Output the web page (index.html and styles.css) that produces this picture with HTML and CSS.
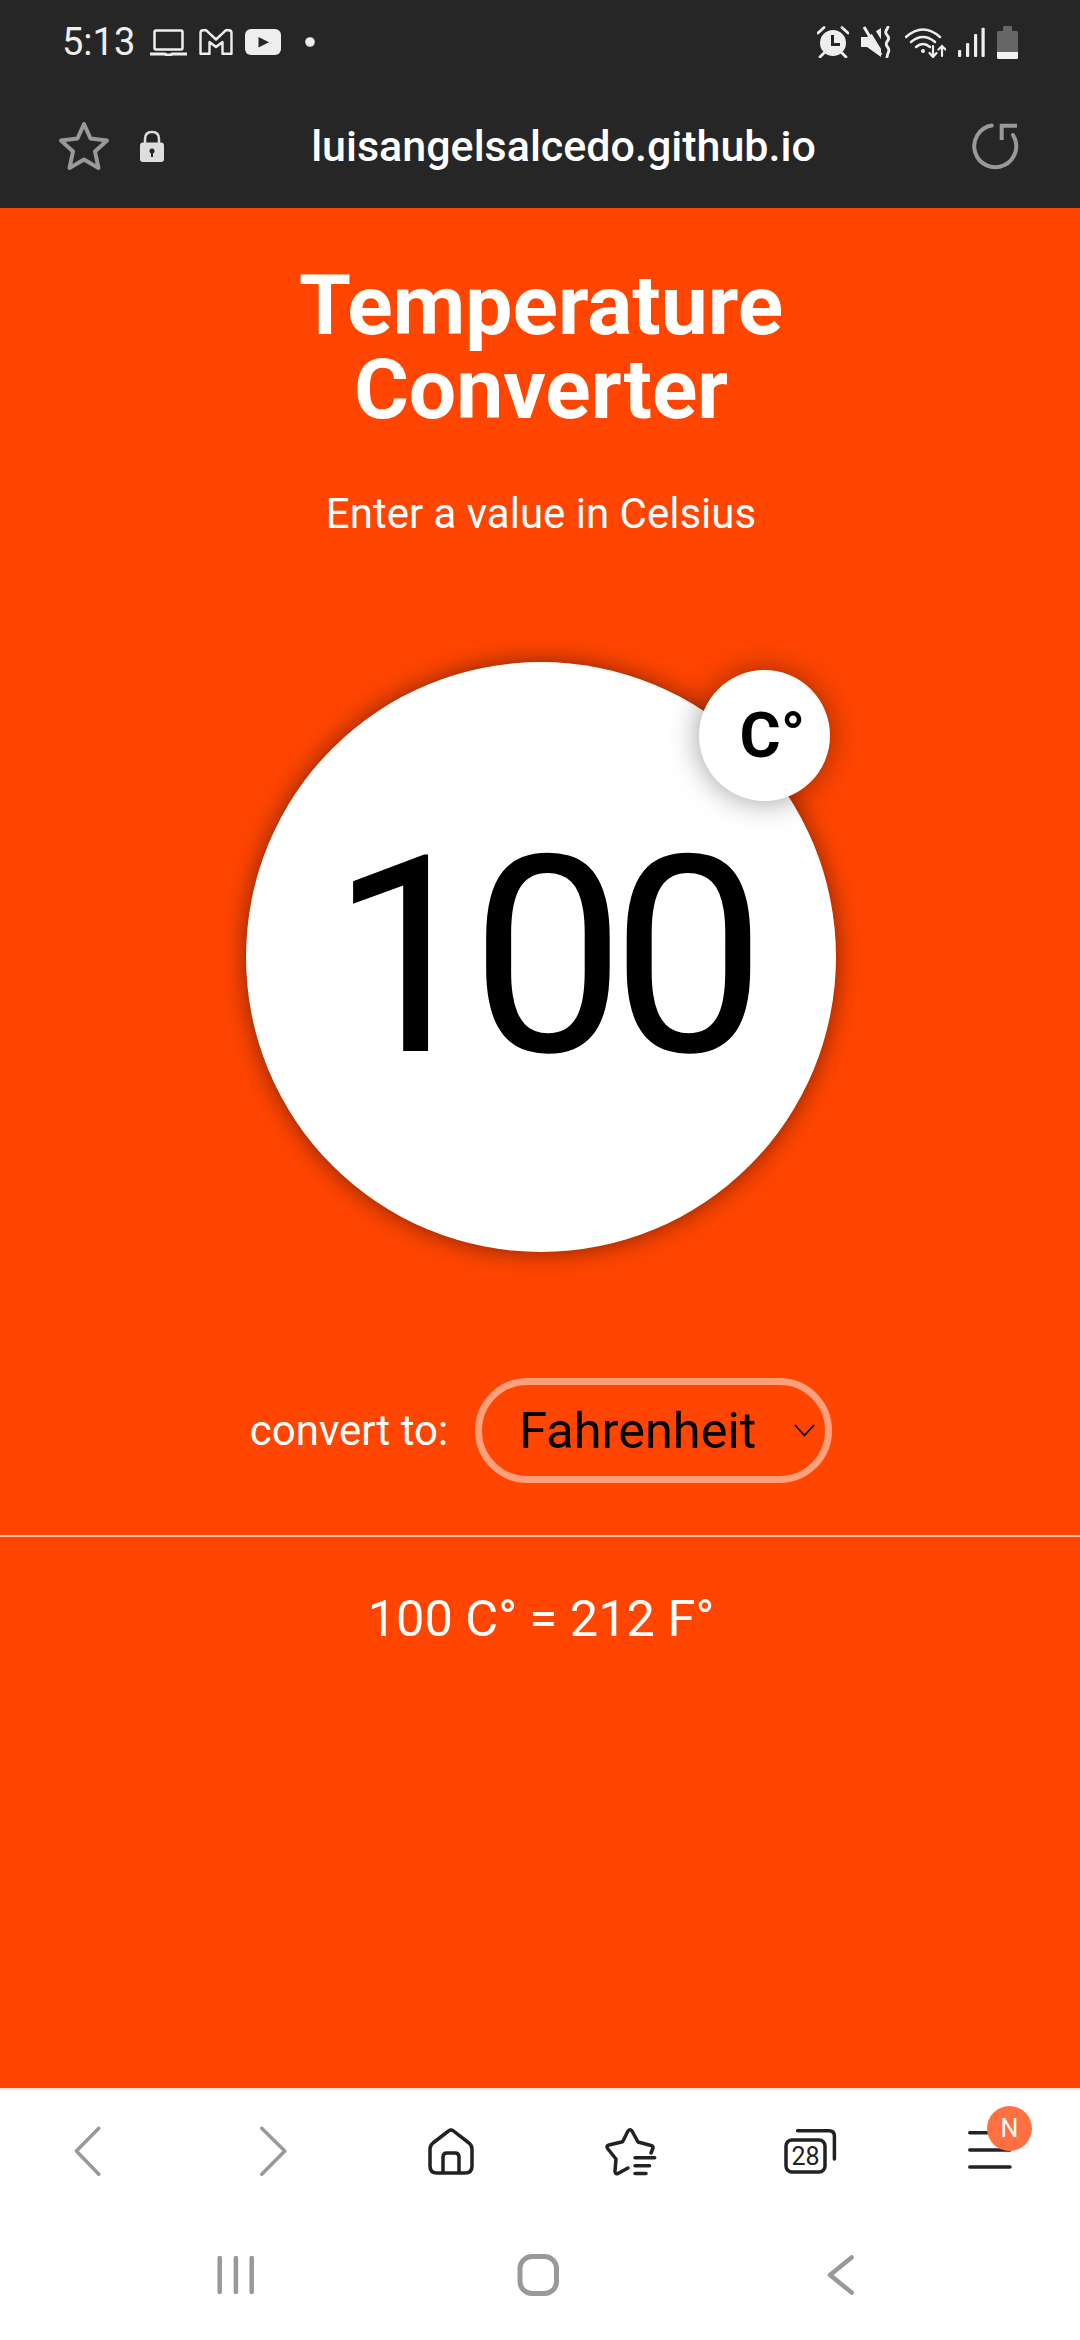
FILE: index.html
```html
<!DOCTYPE html>
<html lang="en">
<head>
	<meta charset="UTF-8">
	<title>Temperature Converter</title>
	<link rel="stylesheet" href="styles.css">
</head>
<body>
	<div class="phone">
		<div class="statusbar">
			<div class="status-left">
				<span class="time">5:13</span>
				<svg width="37" height="27" viewBox="0 0 37 27" fill="none" stroke="#eee" stroke-width="2.5"><rect x="4.500" y="1.500" width="28" height="19" rx="1.500"/><path d="M0 25H15L16.500 26H20.500L22 25H37" stroke-width="3"/></svg>
				<svg width="34" height="26" viewBox="0 0 34 26" fill="none" stroke="#eee" stroke-width="2.400" stroke-linejoin="round"><path d="M1.500 4Q1.500 1.200 4 1.200H7L17 10.500L27 1.200H30Q32.500 1.200 32.500 4V24.800H23.500V13L17 18L10.500 13V24.800H1.500Z"/></svg>
				<svg width="36" height="26" viewBox="0 0 36 26"><rect width="36" height="26" rx="6" fill="#eee"/><path d="M13.500 8V18.500L24 13.200Z" fill="#262626"/></svg>
				<svg class="dot" width="10" height="10" viewBox="0 0 10 10"><circle cx="5" cy="5" r="4.800" fill="#eee"/></svg>
			</div>
			<div class="status-right">
				<svg width="32" height="32" viewBox="0 0 32 32"><circle cx="16" cy="17" r="13" fill="#eee"/><path d="M15.500 9V18.500H23" fill="none" stroke="#262626" stroke-width="3"/><path d="M1 7L7 1.500M31 7L25 1.500M3 31L7 27M29 31L25 27" stroke="#eee" stroke-width="2.800" stroke-linecap="round"/></svg>
				<svg width="32" height="32" viewBox="0 0 32 32" fill="none"><path d="M0 11H6L20 2V31L6 21H0Z" fill="#eee"/><path d="M7 -3L26 28" stroke="#262626" stroke-width="5"/><path d="M3 1L20 29" stroke="#eee" stroke-width="3"/><path d="M27 1L25 5Q24 7 26 9Q29 12 26.500 15Q24 18 26.500 21Q29 24 27 27L26 31" stroke="#eee" stroke-width="2.800" stroke-linecap="round"/></svg>
				<svg width="41" height="32" viewBox="0 0 41 32" fill="none" stroke="#eee" stroke-width="2.500" stroke-linecap="round"><path d="M1 11Q18 -4 35 11"/><path d="M6 16Q18 6 30 16"/><path d="M11 21Q18 15 25 21"/><circle cx="18" cy="25" r="2" fill="#eee" stroke="none"/><path d="M28 20V30M24.500 27L28 31L31.500 27M37 30V20M33.500 23.500L37 20L40.500 23.500" stroke-width="2.200"/></svg>
				<svg width="27" height="32" viewBox="0 0 27 32" fill="#eee"><rect x="0" y="24" width="3.200" height="7" rx="1"/><rect x="8" y="17" width="3.200" height="14" rx="1"/><rect x="16" y="8" width="3.200" height="23" rx="1"/><rect x="23.500" y="1.700" width="3.200" height="29.300" rx="1"/></svg>
				<svg width="21" height="33" viewBox="0 0 21 33"><path d="M6 1Q6 0 7 0H14Q15 0 15 1V5H19.500Q21 5 21 6.500V26H0V6.500Q0 5 1.500 5H6Z" fill="#666"/><path d="M0 26H21V31.500Q21 33 19.500 33H1.500Q0 33 0 31.500Z" fill="#f2f2f2"/></svg>
			</div>
		</div>

		<div class="urlbar">
			<svg class="url-star" width="52" height="50" viewBox="0 0 52 50" fill="none" stroke="#999" stroke-width="4" stroke-linejoin="round"><path d="M26 3L32.500 17.500L49 19.500L37 30.500L40.500 47L26 38.500L11.500 47L15 30.500L3 19.500L19.500 17.500Z"/></svg>
			<svg class="url-lock" width="24" height="32" viewBox="0 0 24 32"><path d="M5 14V9Q5 2 12 2Q19 2 19 9V14" fill="none" stroke="#ddd" stroke-width="2.500"/><rect y="12.500" width="24" height="19.500" rx="3" fill="#ddd"/><circle cx="12" cy="21" r="2.500" fill="#262626"/><rect x="11" y="21" width="2" height="6" fill="#262626"/></svg>
			<span class="url-text">luisangelsalcedo.github.io</span>
			<svg width="48" height="48" viewBox="0 0 48 48" fill="none" stroke="#999" stroke-width="4"><path d="M19.700 3.500A21 21 0 1 0 41 13" stroke-linecap="round"/><path d="M45 3.700H29.700V18"/></svg>
		</div>

		<main class="main">
			<h1 class="title">Temperature<br>Converter</h1>
			<p class="subtitle">Enter a value in Celsius</p>

			<div class="dial">
				<span class="dial-value">100</span>
				<span class="dial-unit">C°</span>
			</div>

			<div class="convert">
				<label class="convert-label">convert to:</label>
				<div class="select">
					<span>Fahrenheit</span>
					<svg width="21" height="13" viewBox="0 0 21 13" fill="none" stroke="#000" stroke-width="1.800"><path d="M1 1L10.500 11.500L20 1"/></svg>
				</div>
			</div>

			<hr class="divider">
			<p class="result">100 C° = 212 F°</p>
		</main>

		<div class="bottom">
			<nav class="tabbar">
				<div class="tab">
					<svg width="80" height="80" viewBox="0 0 80 80" fill="none" stroke="#999" stroke-width="3.500" stroke-linecap="round" stroke-linejoin="round"><path d="M48.800 16.300L26.400 39L48.800 62.300"/></svg>
				</div>
				<div class="tab">
					<svg width="80" height="80" viewBox="0 0 80 80" fill="none" stroke="#999" stroke-width="3.500" stroke-linecap="round" stroke-linejoin="round"><path d="M31.700 16.300L54.800 39L31.700 62.300"/></svg>
				</div>
				<div class="tab">
					<svg width="80" height="80" viewBox="0 0 80 80" fill="none" stroke="#222" stroke-width="3.500" stroke-linejoin="round"><path d="M38.500 19Q41 17 43.500 19L59 31Q62 33.500 62 37V54Q62 61 55 61H27Q20 61 20 54V37Q20 33.500 23 31Z"/><path d="M33 61V45Q33 41 37 41H45Q49 41 49 45V61"/></svg>
				</div>
				<div class="tab">
					<svg width="80" height="80" viewBox="0 0 80 80" fill="none" stroke="#222" stroke-width="3.500" stroke-linecap="round" stroke-linejoin="round"><path d="M61 41L63 36Q63.500 34 61 33.500L48 30L42 19Q40 16.500 38 19L32.600 29.700L19 33Q15.500 34 18 37L26 47L25 59Q25 62.500 28 61.500L38 56"/><path d="M45 45.700H64.700M45 53.700H59.500M45 61.500H56"/></svg>
				</div>
				<div class="tab">
					<svg width="80" height="80" viewBox="0 0 80 80" fill="none" stroke="#222" stroke-width="3.500" stroke-linecap="round"><rect x="16" y="28" width="39" height="32" rx="6"/><path d="M27.600 18.700H59Q64.400 18.700 64.400 24V47"/><text class="tab-count" x="35.500" y="53" text-anchor="middle">28</text></svg>
				</div>
				<div class="tab">
					<div class="tab-menu">
						<svg width="80" height="80" viewBox="0 0 80 80" fill="none" stroke="#222" stroke-width="3.500" stroke-linecap="round"><path d="M19.800 20.700H60M19.800 38H60M19.800 55H60"/></svg>
						<span class="badge">N</span>
					</div>
				</div>
			</nav>
			<div class="sysnav">
				<svg width="60" height="60" viewBox="0 0 60 60" fill="none" stroke="#999" stroke-width="4.500" stroke-linecap="round"><path d="M13.700 13V47M29.900 13V47M45.700 13V47"/></svg>
				<svg width="60" height="60" viewBox="0 0 60 60" fill="none" stroke="#999" stroke-width="5"><rect x="12" y="11.500" width="36.500" height="37" rx="12"/></svg>
				<svg width="60" height="60" viewBox="0 0 60 60" fill="none" stroke="#999" stroke-width="4.500" stroke-linecap="round" stroke-linejoin="round"><path d="M41.600 12.500L20 30L41.600 47.500"/></svg>
			</div>
		</div>
	</div>
</body>
</html>
```

FILE: styles.css
```css
*{margin:0px;padding:0px;box-sizing:border-box;}
body{
	font-family: Roboto, "Liberation Sans", sans-serif;
	background-color: #fff;
}
.phone{
	width: 1080px;
	height: 2340px;
	display: flex;
	flex-direction: column;
	overflow: hidden;
}
.statusbar{
	height: 84px;
	padding: 0 62px;
	background-color: #262626;
	display: flex;
	justify-content: space-between;
	align-items: center;
}
.status-left,.status-right{
	display: flex;
	align-items: center;
	gap: 12px;
}
.time{
	margin-right: 3px;
	font-size: 38px;
	color: #eee;
}
.dot{margin-left: 12px;}
.urlbar{
	height: 124px;
	padding: 0 60px 0 58px;
	background-color: #262626;
	display: flex;
	align-items: center;
}
.url-lock{margin-left: 30px;}
.url-text{
	flex: 1;
	margin-right: 9px;
	text-align: center;
	font-size: 43px;
	font-weight: 500;
	color: #fff;
}
.main{
	flex: 1;
	background-color: #ff4500;
	color: #fff;
	display: flex;
	flex-direction: column;
	align-items: center;
}
.title{
	margin-top: 56px;
	margin-left: 2px;
	font-size: 84px;
	line-height: 84px;
	font-weight: 700;
	text-align: center;
}
.subtitle{
	margin-top: 58px;
	margin-left: 2px;
	font-size: 42px;
	line-height: 48px;
}
.dial{
	width: 590px;
	height: 590px;
	margin-top: 124px;
	margin-left: 2px;
	border-radius: 50%;
	background-color: #fff;
	box-shadow: 0 0 25px rgba(0,0,0,0.5);
	position: relative;
	display: flex;
	justify-content: center;
	align-items: center;
}
.dial-value{
	font-size: 275px;
	letter-spacing: -14px;
	color: #000;
}
.dial-unit{
	width: 131px;
	height: 131px;
	border-radius: 50%;
	background-color: #fff;
	box-shadow: 0 0 30px rgba(0,0,0,0.4);
	position: absolute;
	left: 453px;
	top: 8px;
	display: flex;
	justify-content: center;
	align-items: center;
	padding-left: 16px;
	font-size: 63px;
	font-weight: 700;
	color: #000;
}
.convert{
	margin-top: 126px;
	margin-left: 2px;
	display: flex;
	align-items: center;
	gap: 27px;
}
.convert-label{
	font-size: 42px;
}
.select{
	width: 357px;
	height: 105px;
	padding: 0 10px 0 37px;
	border: 7px solid #ffa07c;
	border-radius: 53px;
	display: flex;
	justify-content: space-between;
	align-items: center;
	font-size: 50.500px;
	color: #000;
}
.divider{
	width: 100%;
	height: 2px;
	margin-top: 52px;
	border: 0;
	background-color: #ffc0a8;
}
.result{
	margin-top: 52px;
	margin-left: 2px;
	font-size: 50.500px;
	line-height: 60px;
}
.bottom{
	height: 252px;
	padding-top: 22px;
	border-top: 2px solid #efe4de;
	background-color: #fff;
}
.tabbar{
	display: grid;
	grid-template-columns: repeat(6,1fr);
}
.tab{
	display: flex;
	justify-content: center;
}
.tab-count{
	font-family: Roboto, sans-serif;
	font-size: 25px;
	fill: #222;
	stroke: none;
}
.tab-menu{
	height: 80px;
	position: relative;
}
.badge{
	width: 45px;
	height: 45px;
	border-radius: 50%;
	background-color: #ff7043;
	position: absolute;
	left: 37px;
	top: -6px;
	display: flex;
	justify-content: center;
	align-items: center;
	font-size: 25px;
	color: #fff;
}
.sysnav{
	margin-top: 53px;
	padding-left: 206px;
	display: flex;
	gap: 242px;
}
```
